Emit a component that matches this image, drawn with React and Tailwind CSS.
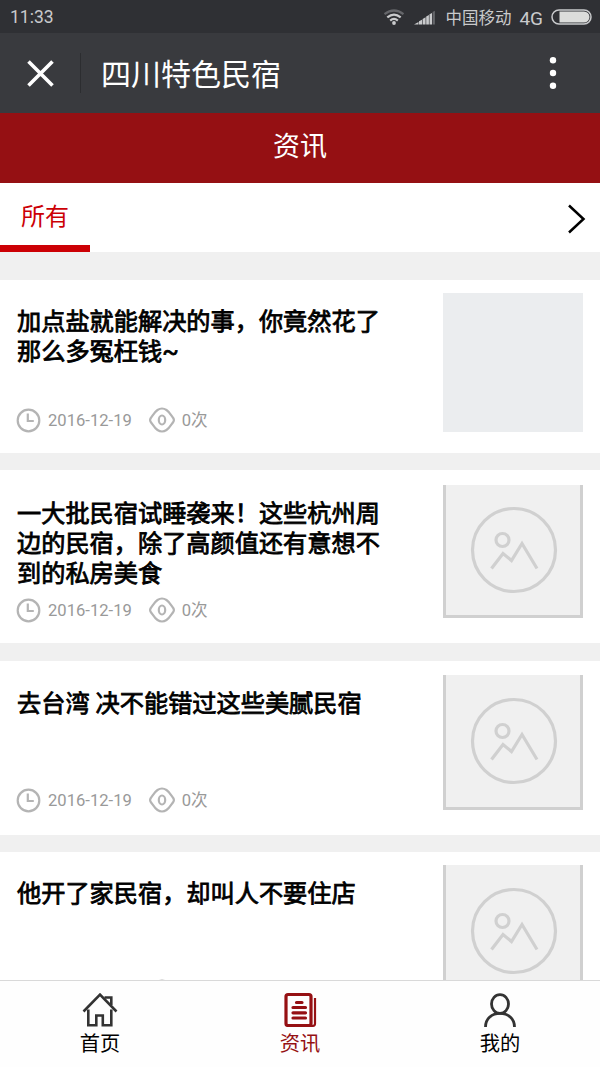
import clsx from 'clsx';

const ARTICLES = [
  {
    id: 1,
    title: '加点盐就能解决的事，你竟然花了那么多冤枉钱~',
    date: '2016-12-19',
    views: 0,
    loading: true,
    cardClass: 'mb-[17px] h-[173px]',
    titleClass: 'pt-[27px]',
    thumbClass: 'mt-[13px] h-[139px]',
  },
  {
    id: 2,
    title: '一大批民宿试睡袭来！这些杭州周边的民宿，除了高颜值还有意想不到的私房美食',
    date: '2016-12-19',
    views: 0,
    cardClass: 'mb-[18px] h-[173px]',
    titleClass: 'pt-[29px]',
    thumbClass: 'mt-[15px] h-[133px] border-b-[3px] pt-[21px]',
  },
  {
    id: 3,
    title: '去台湾 决不能错过这些美腻民宿',
    date: '2016-12-19',
    views: 0,
    cardClass: 'mb-[17px] h-[174px] pb-0.5',
    titleClass: 'pt-7',
    thumbClass: 'mt-3.5 h-[135px] border-b-[3px] pt-[22px]',
  },
  {
    id: 4,
    title: '他开了家民宿，却叫人不要住店',
    date: '2016-12-19',
    views: 0,
    cardClass: 'h-[173px]',
    titleClass: 'pt-[27px]',
    thumbClass: 'mt-[13px] h-[135px] border-b-[3px] pt-[22px]',
  },
];

function StatusBar() {
  return (
    <div className="flex h-[33px] shrink-0 items-center bg-[#2f3034] pl-2.5 pr-2 pt-px text-[#c9cacc]">
      <span className="pt-0.5 text-[17.5px] leading-none">11:33</span>
      <svg className="ml-auto" width="22" height="17" viewBox="0 0 22 17" fill="none" strokeWidth="2.2">
        <path d="M1.5 5.2Q11-2.2 20.5 5.2" stroke="#65666a" />
        <path d="M4.3 8.4Q11 2.8 17.7 8.4" stroke="currentColor" />
        <path d="M7.2 11.6Q11 8.2 14.8 11.6" stroke="currentColor" />
        <circle cx="11" cy="14" r="1.9" fill="currentColor" />
      </svg>
      <svg className="ml-[9px]" width="21" height="15" viewBox="0 0 21 15" fill="currentColor">
        <path d="M0 14.5 4.5 12v2.5zM5 11.3l3-1.6v4.8H5zM8.6 8.9l3-1.6v7.2h-3zM12.2 6.5l2.700-1.500v9.500h-2.700zM15.500 4.300 18 3v11.500h-2.500z" />
        <path d="M18.600 2.100 20.900.8v13.700h-2.300z" fill="#65666a" />
      </svg>
      <span className="ml-2.5 pt-[3px] text-[16.500px] leading-5">中国移动</span>
      <span className="ml-2 pt-0.5 text-[19px] leading-none">4G</span>
      <svg className="ml-2" width="41" height="16" viewBox="0 0 41 16" fill="none">
        <rect x="1" y="1" width="39" height="14" rx="7" stroke="currentColor" strokeWidth="1.5" />
        <path d="M8.500 2.500H33a5.500 5.500 0 0 1 0 11H8.500z" fill="#dcdddb" />
      </svg>
    </div>
  );
}

function TitleBar() {
  return (
    <header className="flex h-20 shrink-0 items-center bg-[#393a3e] text-white">
      <svg className="ml-[27px]" width="27" height="27" viewBox="0 0 27 27" stroke="currentColor" strokeWidth="3.600">
        <path d="M1.500 1.500 25.500 25.500M25.500 1.500 1.500 25.500" />
      </svg>
      <div className="ml-[26px] h-10 w-px bg-[#2c2d30]" />
      <h1 className="ml-5 pt-[3px] text-[30px] font-normal leading-[44px]">四川特色民宿</h1>
      <svg className="ml-auto mr-[43px]" width="8" height="34" viewBox="0 0 8 34" fill="currentColor">
        <circle cx="4" cy="4.300" r="3.200" />
        <circle cx="4" cy="17" r="3.200" />
        <circle cx="4" cy="29.700" r="3.200" />
      </svg>
    </header>
  );
}

function Placeholder() {
  return (
    <svg className="ml-0.5 shrink-0" width="88" height="88" viewBox="0 0 88 88" fill="none" stroke="#d0d0d0" strokeWidth="3.200">
      <circle cx="44" cy="44" r="41.500" />
      <circle cx="32.500" cy="34" r="6.500" />
      <path d="M21.500 62.500 33 47.500l8.500 7L52 37.500 67 62.500" />
    </svg>
  );
}

function ArticleCard({ article }) {
  return (
    <article className={clsx('flex shrink-0 justify-between bg-white px-[17px]', article.cardClass)}>
      <div className="flex w-[370px] flex-col">
        <h2
          className={clsx(
            'text-[24.200px] font-normal leading-[30px] text-black [-webkit-text-stroke:0.8px_#000]',
            article.titleClass
          )}
        >
          {article.title}
        </h2>
        <div className="mb-5 mt-auto flex h-[26px] items-center text-[16.600px] leading-none text-[#999]">
          <svg className="-ml-px" width="25" height="25" viewBox="0 0 25 25" fill="none" stroke="#b4b4b4" strokeWidth="2.200">
            <circle cx="12.500" cy="12.500" r="10.800" />
            <path d="M11.800 5.500v7.500h6" />
          </svg>
          <span className="ml-[7px] pt-[3px]">{article.date}</span>
          <svg className="ml-[17px]" width="26" height="26" viewBox="0 0 26 26" fill="none" stroke="#b4b4b4" strokeWidth="2.200">
            <path d="M1.800 11C4 8 5.500 5 8.500 3 11.500 1 14.500 1 17.500 3 20.500 5 22 8 24.200 11 25.100 12.300 25.100 13.700 24.200 15 22 18 20.500 21 17.500 23 14.500 25 11.500 25 8.500 23 5.500 21 4 18 1.800 15 .9 13.700.9 12.300 1.800 11Z" />
            <ellipse cx="13" cy="13" rx="3.200" ry="4.500" />
          </svg>
          <span className="ml-[7px] pt-[3px]">{article.views}次</span>
        </div>
      </div>
      {article.loading ? (
        <div className={clsx('w-[140px] bg-[#ebedef]', article.thumbClass)} />
      ) : (
        <div
          className={clsx('flex w-[140px] justify-center border-x-[3px] border-[#d0d0d0] bg-[#f0f0f0]', article.thumbClass)}
        >
          <Placeholder />
        </div>
      )}
    </article>
  );
}

function HomeIcon() {
  return (
    <svg width="36" height="36" viewBox="0 0 36 36" fill="none" stroke="currentColor" strokeWidth="2.600">
      <path d="M1.500 20.500 18 3.500 34.500 20.500" />
      <path d="M6.300 18.500v15.700h8V24.500h6.500v9.700h8.500V18.500" />
      <path d="M22.500 6.500h6.800v7.500" />
    </svg>
  );
}

function NewsIcon() {
  return (
    <svg width="36" height="36" viewBox="0 0 36 36" fill="none" stroke="currentColor" strokeWidth="3.200">
      <rect x="4" y="3.500" width="25" height="31" rx="2" />
      <path d="M27 34.800h4c1.500 0 2-.8 2-2V7" strokeWidth="2.200" />
      <path d="M14.500 11.500h5.500M11 16.500h12.500M11 21.800h12.500M11 27h12.500" strokeLinecap="round" />
    </svg>
  );
}

function UserIcon() {
  return (
    <svg width="36" height="36" viewBox="0 0 36 36" fill="none" stroke="currentColor" strokeWidth="2.800">
      <ellipse cx="18" cy="13" rx="8.500" ry="9.300" />
      <path d="M3.500 36C3.500 27.500 10 22.300 18 22.300S32.500 27.500 32.500 36" />
    </svg>
  );
}

const NAV_ITEMS = [
  { label: '首页', icon: HomeIcon },
  { label: '资讯', icon: NewsIcon, active: true },
  { label: '我的', icon: UserIcon },
];

function BottomNav() {
  return (
    <nav className="flex h-[87px] shrink-0 border-t border-[#d9d9d9] bg-[#fefefe]">
      {NAV_ITEMS.map(({ label, icon: Icon, active }) => (
        <a
          key={label}
          className={clsx('flex flex-1 flex-col items-center pt-2.5', active ? 'text-[#951013]' : 'text-black')}
        >
          <span className={active ? 'text-[#951013]' : 'text-[#333]'}>
            <Icon />
          </span>
          <span className="mt-[3px] text-[20.250px] leading-[28px]">{label}</span>
        </a>
      ))}
    </nav>
  );
}

export default function App() {
  return (
    <div className="flex h-[1067px] w-[600px] flex-col overflow-hidden bg-[#f0f0f0] font-[Roboto,'Noto_Sans_CJK_SC',sans-serif]">
      <StatusBar />
      <TitleBar />
      <div className="flex h-[70px] shrink-0 justify-center bg-[#951013] pt-3.5 text-[27px] leading-10 text-white">
        资讯
      </div>
      <div className="flex h-[69px] shrink-0 items-start justify-between bg-white pr-3.5">
        <button className="flex h-[69px] w-[90px] justify-center border-b-[7px] border-[#cc0005] pt-4 text-[24px] leading-9 text-[#cc0005]">
          所有
        </button>
        <svg className="mt-[21px]" width="19" height="30" viewBox="0 0 19 30" fill="none" stroke="#000" strokeWidth="2.500">
          <path d="M2 1.500 16.500 15 2 28.500" />
        </svg>
      </div>
      <main className="flex min-h-0 flex-1 flex-col overflow-hidden pt-7">
        {ARTICLES.map((article) => (
          <ArticleCard key={article.id} article={article} />
        ))}
      </main>
      <BottomNav />
    </div>
  );
}
